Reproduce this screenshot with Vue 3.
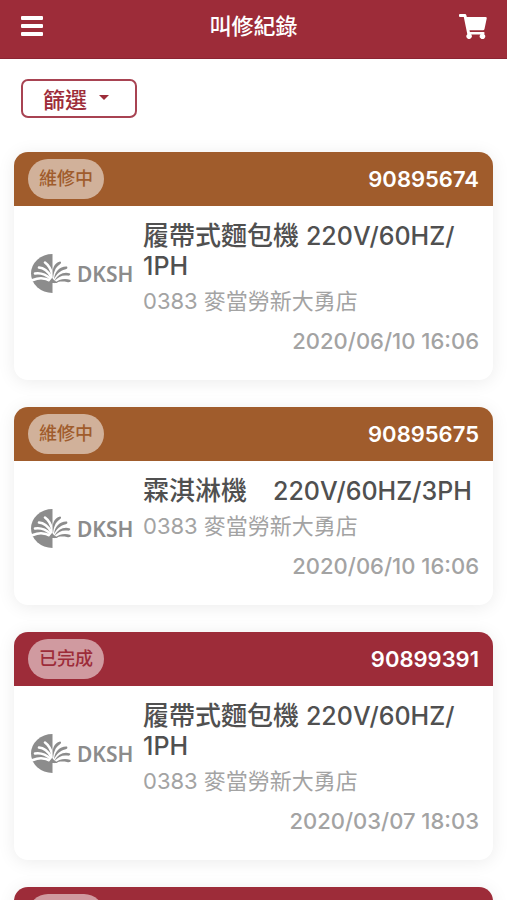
<template>
  <div class="page">
    <header class="navbar">
      <button class="icon-btn" type="button" aria-label="選單">
        <svg width="24" height="20" viewBox="0 0 24 20" fill="#fff">
          <rect x="1" y="0" width="22" height="4" rx="1" />
          <rect x="1" y="8" width="22" height="4" rx="1" />
          <rect x="1" y="16" width="22" height="4" rx="1" />
        </svg>
      </button>
      <h1 class="navbar-title">叫修紀錄</h1>
      <button class="icon-btn" type="button" aria-label="購物車">
        <svg width="28" height="25" viewBox="0 0 28 25" fill="#fff">
          <path d="M1 0H6Q7 0 7.300 1L7.800 3H26.500Q28 3 27.700 4.500L25.500 15Q25.200 16.300 24 16.300H10.500L10.900 18H24.500Q25.800 18 25.500 19.300L25.200 20.300A2.700 2.700 0 1 1 21.500 20.500H12.200A2.700 2.700 0 1 1 8.300 20.200L4.800 3H1Q0 3 0 2V1Q0 0 1 0Z" />
        </svg>
      </button>
    </header>

    <main class="content">
      <button class="filter-btn" type="button">
        <span>篩選</span>
        <span class="caret"></span>
      </button>

      <article v-for="(item, index) in records" :key="index" class="card">
        <div class="card-header" :class="item.status">
          <span class="badge">{{ statusText[item.status] }}</span>
          <span class="order-no">{{ item.orderNo }}</span>
        </div>
        <div v-if="item.name" class="card-body">
          <svg class="logo" viewBox="0 0 103 40" role="img" aria-label="DKSH">
            <path d="M22.500 0A21.500 19.500 0 0 0 22.500 39Z" fill="#8c8c8c" />
            <!-- palm: white leaves inside the half disc, grey ones outside -->
            <g fill="none" stroke="#fff" stroke-width="2.600" stroke-linecap="round">
              <path d="M21 27Q12 22 3 26" />
              <path d="M21 25Q13 18 5 19.500" />
              <path d="M21.500 23Q16 14 9 13.500" />
              <path d="M22.500 21Q20 12 15 8.500" />
            </g>
            <g fill="#8c8c8c">
              <path d="M23 24C21.500 15 24 9 30 7.500C32 8 31 10 29 11C25 14 24 18 23 24Z" />
              <path d="M24 25C25 17 30 12 37 12.500C38 14 37 15 35 15.500C30 16.500 27 20 24 25Z" />
              <path d="M24.500 27C28 20 34 17.500 40 19.500C41 21 39 22 37 21.500C32 21 28 23 24.500 27Z" />
              <path d="M24 29.500C29 25 35 24 40.500 26C41.500 28 39 28.500 37 28C32 27 28 27.500 24 29.500Z" />
              <path d="M18 29L22 24L24 26L28 29Z" />
            </g>
            <text x="47" y="28" class="logo-text">DKSH</text>
          </svg>
          <div class="info">
            <h2 class="title">
              {{ item.name }}<span class="spec">{{ item.spec }}</span>
            </h2>
            <p class="store">{{ item.store }}</p>
            <time class="time">{{ item.time }}</time>
          </div>
        </div>
      </article>
    </main>
  </div>
</template>

<script setup>
const statusText = {
  repairing: '維修中',
  done: '已完成'
};

const records = [
  {
    status: 'repairing',
    orderNo: '90895674',
    name: '履帶式麵包機 ',
    spec: '220V/60HZ/ 1PH',
    store: '0383 麥當勞新大勇店',
    time: '2020/06/10 16:06'
  },
  {
    status: 'repairing',
    orderNo: '90895675',
    name: '霖淇淋機\u3000',
    spec: '220V/60HZ/3PH',
    store: '0383 麥當勞新大勇店',
    time: '2020/06/10 16:06'
  },
  {
    status: 'done',
    orderNo: '90899391',
    name: '履帶式麵包機 ',
    spec: '220V/60HZ/ 1PH',
    store: '0383 麥當勞新大勇店',
    time: '2020/03/07 18:03'
  },
  { status: 'done' }
];
</script>

<style>
body {
  margin: 0;
  background: #fff;
}
</style>

<style scoped>
.page {
  height: 100vh;
  overflow: hidden;
  font-family: Inter, "Noto Sans CJK TC", sans-serif;
  font-weight: 500;
  color: #505050;
}

.navbar {
  display: flex;
  align-items: center;
  justify-content: space-between;
  height: 59px;
  padding: 0 20px 6px;
  box-sizing: border-box;
  background: #9d2c39;
  border-bottom: 1px solid #8c2433;
}

.icon-btn {
  display: flex;
  width: 28px;
  padding: 0;
  border: none;
  background: transparent;
  cursor: pointer;
}

.navbar-title {
  margin: 0;
  font-size: 22px;
  font-weight: 500;
  line-height: 30px;
  color: #fff;
}

.content {
  padding: 20px 14px;
}

.filter-btn {
  display: flex;
  align-items: center;
  gap: 12px;
  height: 39px;
  margin: 0 7px 34px;
  padding: 0 26px 2px 20px;
  border: 2px solid #a84352;
  border-radius: 7px;
  background: #fff;
  font-family: inherit;
  font-size: 22px;
  font-weight: 500;
  color: #9d2c39;
  cursor: pointer;
}

.caret {
  border-top: 5px solid #9d2c39;
  border-left: 5px solid transparent;
  border-right: 5px solid transparent;
}

.card {
  margin-bottom: 27px;
  border-radius: 14px;
  background: #fff;
  box-shadow: 0 2px 18px rgba(0, 0, 0, 0.08);
  overflow: hidden;
}

.card-header {
  display: flex;
  align-items: center;
  justify-content: space-between;
  height: 54px;
  padding: 0 14px;
  color: #9d2c39;
  background: #9d2c39;
}

.card-header.repairing {
  color: #a05c2c;
  background: #a05c2c;
}

.badge {
  padding: 0 11px;
  border-radius: 20px;
  background: rgba(255, 255, 255, 0.52);
  font-size: 18px;
  line-height: 40px;
}

.order-no {
  font-size: 22px;
  font-weight: 600;
  color: #fff;
}

.card-body {
  display: flex;
  align-items: flex-start;
  gap: 10px;
  padding: 15px 14px 19px 16px;
}

.logo {
  flex-shrink: 0;
  width: 103px;
  height: 40px;
  margin-top: 33px;
  overflow: visible;
}

.logo-text {
  font-family: "Noto Sans", sans-serif;
  font-size: 21px;
  font-weight: 600;
  fill: #8c8c8c;
}

.info {
  flex: 1;
  min-width: 0;
}

.title {
  margin: 0;
  font-size: 26px;
  font-weight: 500;
  line-height: 30px;
}

.spec {
  font-size: 25px;
}

.store {
  margin: 0;
  font-size: 22px;
  font-weight: 400;
  line-height: 40px;
  color: #a3a3a3;
}

.time {
  display: block;
  font-size: 22px;
  line-height: 40px;
  text-align: right;
  color: #a3a3a3;
}
</style>
